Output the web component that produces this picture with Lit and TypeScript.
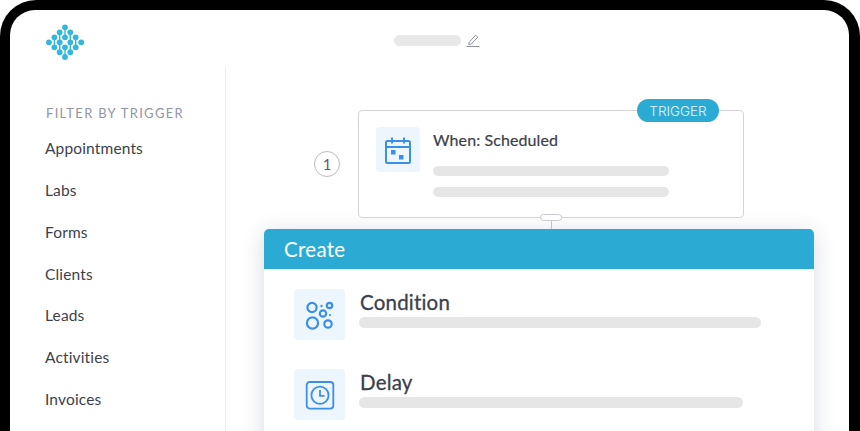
import { LitElement, html, css, svg } from "lit";
import { customElement } from "lit/decorators.js";

const rows: [number, number[]][] = [
  [27.3, [65]],
  [32.3, [59.7, 70.3]],
  [37.3, [54.4, 65, 75.7]],
  [42.3, [48.9, 59.7, 70.3, 81.2]],
  [47.3, [54.4, 65, 75.7]],
  [52.2, [59.7, 70.3]],
  [57, [65]],
];
const links = [
  [59.7, 32.3, 59.7, 42.3], [70.3, 32.3, 70.3, 42.3],
  [59.7, 42.3, 59.7, 52.2], [70.3, 42.3, 70.3, 52.2],
  [65, 27.3, 65, 37.3], [65, 47.3, 65, 57],
  [54.4, 37.3, 54.4, 47.3], [75.7, 37.3, 75.7, 47.3],
];

@customElement("app-root")
export class AppRoot extends LitElement {
  static styles = css`
    :host { display: block; width: 860px; height: 431px; overflow: hidden; background: #fff;
      font-family: "Lato", "Open Sans", sans-serif; color: #3c3f4a; }
    .frame { box-sizing: border-box; width: 860px; height: 431px; background: #000;
      border-radius: 36px 36px 0 0; padding: 10px 11px 0 10px; }
    .screen { height: 421px; background: #fff; border-radius: 25px 25px 0 0; overflow: hidden;
      display: flex; flex-direction: column; }
    .top { height: 57px; flex: none; display: grid; grid-template-columns: 1fr auto 1fr; align-items: center; }
    .logo { display: block; margin: 7px 0 0 22px; }
    .namebox { display: flex; align-items: center; gap: 5px; margin: 3px 0 0 15px; }
    .namepill { width: 67px; height: 11px; border-radius: 6px; background: #e8e8e8; }
    .body { flex: 1; display: flex; min-height: 0; }
    .side { width: 216px; flex: none; border-right: 1px solid #ececf0; padding-left: 35px; box-sizing: border-box; }
    .side h2 { margin: 38px 0 0 1px; font-size: 13px; line-height: 16px; font-weight: 400; letter-spacing: 1.3px; color: #9295a3; }
    .side ul { list-style: none; margin: 7px 0 0; padding: 0; }
    .side li { height: 41.85px; line-height: 41.85px; font-size: 15.5px; letter-spacing: 0.15px; color: #3c3f4a; }
    .main { flex: 1; padding: 43px 0 0 38px; min-width: 0; }
    .step { display: flex; align-items: center; margin-left: 50px; gap: 18px; }
    .num { width: 26px; height: 26px; border-radius: 50%; border: 1px solid #b9bbc4; box-sizing: border-box;
      display: flex; align-items: center; justify-content: center; font-size: 15px; color: #5a5d69; }
    .card { position: relative; width: 386px; height: 108px; box-sizing: border-box; border: 1px solid #d3d4da;
      border-radius: 4px; padding: 16px 17px; display: flex; gap: 13px; background: #fff; }
    .badge { position: absolute; top: -12px; right: 24px; width: 82px; height: 23px; border-radius: 12px; background: #2babd3;
      color: #e6f6fb; font-family: "Inter", sans-serif; font-weight: 300; font-size: 13.5px; display: flex; align-items: center; justify-content: center; }
    .knob { position: absolute; left: 181px; bottom: -4px; width: 22px; height: 7px; box-sizing: border-box;
      border: 1px solid #c9cad1; border-radius: 4px; background: #fff; }
    .tile { flex: none; background: #edf6fd; border-radius: 4px; display: flex; align-items: center; justify-content: center; }
    .tile.s { width: 44px; height: 45px; }
    .tile.l { width: 51px; height: 51px; }
    .card-text { flex: 1; padding-right: 57px; }
    .card-title { font-size: 16px; line-height: 26px; letter-spacing: 0.1px; color: #3c3f4a; -webkit-text-stroke: 0.2px #3c3f4a; }
    .bar { height: 10px; border-radius: 5px; background: #e6e6e6; }
    .card-bars { display: flex; flex-direction: column; gap: 11px; margin-top: 13px; }
    .stem { width: 1px; height: 11px; background: #c9cad1; margin-left: 287px; }
    .panel { width: 550px; height: 300px; border-radius: 5px 5px 0 0; background: #fff;
      box-shadow: 0 4px 22px rgba(40, 50, 90, 0.18); }
    .panel-head { height: 40px; background: #2babd3; border-radius: 5px 5px 0 0; color: #fff; font-size: 20.5px;
      letter-spacing: 0.3px; line-height: 40px; padding-left: 20px; }
    .rows { padding: 20px 30px 0; display: flex; flex-direction: column; gap: 29px; }
    .row { display: flex; gap: 14px; }
    .row-text { flex: 1; }
    .row-title { font-size: 20.5px; line-height: 26px; letter-spacing: 0.2px; color: #3c3f4a; padding-left: 1px; -webkit-text-stroke: 0.3px #3c3f4a; }
    .row .bar { height: 11px; border-radius: 6px; margin-top: 2px; }
  `;

  private logo() {
    return html`<svg class="logo" width="66" height="40" viewBox="32 22 66 40">
      ${links.map(([a, b, c, d]) => svg`<line x1=${a} y1=${b} x2=${c} y2=${d} stroke="#33b7dd" stroke-width="1.4"></line>`)}
      ${rows.flatMap(([y, xs]) => xs.map((x) => svg`<circle cx=${x} cy=${y} r="2.9" fill="#33b7dd"></circle>`))}
    </svg>`;
  }

  render() {
    const items = ["Appointments", "Labs", "Forms", "Clients", "Leads", "Activities", "Invoices"];
    return html`<div class="frame"><div class="screen">
      <div class="top">
        <div>${this.logo()}</div>
        <div class="namebox">
          <div class="namepill"></div>
          <svg width="14" height="14" viewBox="0 0 14 14" fill="none" stroke="#8c8fa0" stroke-width="1">
            <path d="M3 9.5 L9.5 2.2 L11.8 4.2 L5.3 11 L2.8 11.4 Z"></path>
            <path d="M0.5 13.5 H13.5"></path>
          </svg>
        </div>
        <div></div>
      </div>
      <div class="body">
        <aside class="side">
          <h2>FILTER BY TRIGGER</h2>
          <ul>${items.map((i) => html`<li>${i}</li>`)}</ul>
        </aside>
        <section class="main">
          <div class="step">
            <div class="num">1</div>
            <div class="card">
              <div class="badge">TRIGGER</div>
              <div class="tile s">
                <svg width="28" height="28" viewBox="0 0 28 28" fill="none" stroke="#3b8fe8" stroke-width="2">
                  <rect x="2" y="5" width="24" height="22" rx="1.5"></rect>
                  <path d="M2 11 H26 M8 1.5 V7.5 M20 1.5 V7.5"></path>
                  <rect x="7" y="14" width="4.5" height="4.5" fill="#3b8fe8" stroke="none"></rect>
                  <rect x="15" y="19" width="4.5" height="4.5" fill="#3b8fe8" stroke="none"></rect>
                </svg>
              </div>
              <div class="card-text">
                <div class="card-title">When: Scheduled</div>
                <div class="card-bars">
                  <div class="bar"></div>
                  <div class="bar"></div>
                </div>
              </div>
              <div class="knob"></div>
            </div>
          </div>
          <div class="stem"></div>
          <div class="panel">
            <div class="panel-head">Create</div>
            <div class="rows">
              <div class="row">
                <div class="tile l">
                  <svg width="30" height="30" viewBox="0 0 30 30" fill="none" stroke="#3b8fe8" stroke-width="2.2">
                    <circle cx="7" cy="7.5" r="4.6"></circle>
                    <circle cx="24.5" cy="5.5" r="2.7"></circle>
                    <circle cx="18" cy="13.5" r="3.2"></circle>
                    <circle cx="7.5" cy="23" r="5.6"></circle>
                    <circle cx="23" cy="24" r="3.7"></circle>
                    <circle cx="16.5" cy="6" r="1.2" fill="#3b8fe8" stroke="none"></circle>
                    <circle cx="25" cy="15" r="1.1" fill="#3b8fe8" stroke="none"></circle>
                  </svg>
                </div>
                <div class="row-text">
                  <div class="row-title">Condition</div>
                  <div class="bar" style="width:402px"></div>
                </div>
              </div>
              <div class="row">
                <div class="tile l">
                  <svg width="30" height="30" viewBox="0 0 30 30" fill="none" stroke="#3b8fe8" stroke-width="1.8">
                    <rect x="1.7" y="2" width="26.6" height="26.6" rx="3"></rect>
                    <circle cx="15" cy="15.3" r="8.6"></circle>
                    <path d="M15 10 V15.8 H19.5"></path>
                  </svg>
                </div>
                <div class="row-text">
                  <div class="row-title">Delay</div>
                  <div class="bar" style="width:384px"></div>
                </div>
              </div>
            </div>
          </div>
        </section>
      </div>
    </div></div>`;
  }
}
